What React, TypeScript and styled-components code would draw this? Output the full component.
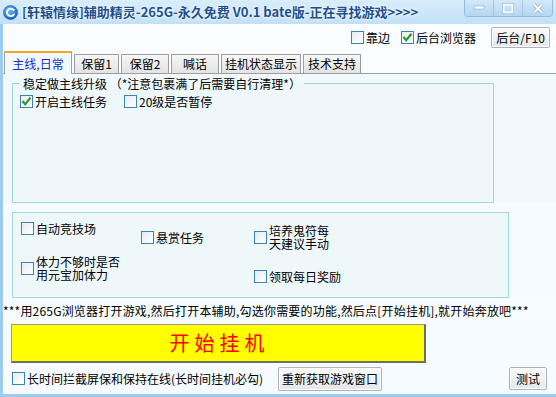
import React from "react";
import styled, { createGlobalStyle } from "styled-components";

const GlobalStyle = createGlobalStyle`
  html, body {
    margin: 0;
    padding: 0;
    background: #f5fbfe;
  }
  body {
    font-family: "Noto Sans CJK SC", "Liberation Sans", sans-serif;
    font-size: 12px;
    color: #000;
  }
`;

const Window = styled.div`
  width: 556px;
  height: 397px;
  display: flex;
  flex-direction: column;
  overflow: hidden;
  background: #f5fbfe;
`;

const TitleBar = styled.div`
  height: 24px;
  flex: none;
  display: flex;
  align-items: center;
  padding-left: 3px;
  background: linear-gradient(#d9edfb, #c2e0f6);
`;

const TitleText = styled.span`
  margin-left: 4px;
  font-size: 13px;
  font-weight: bold;
  line-height: 16px;
  color: #1d4f8e;
  text-shadow: 0 0 2px #fff, 0 0 4px #fff;
  white-space: nowrap;
`;

const WinButtons = styled.div`
  margin-left: auto;
  margin-right: 3px;
  align-self: flex-start;
  display: flex;
  height: 16px;
  border: 1px solid #8fbbe0;
  border-top: none;
  border-radius: 0 0 4px 4px;
  overflow: hidden;
`;

const WinButton = styled.div<{ $w: number }>`
  width: ${(p) => p.$w}px;
  display: flex;
  align-items: center;
  justify-content: center;
  background: linear-gradient(#d3e9f9, #b4d7f1);
  & + & {
    border-left: 1px solid #a3c9e8;
  }
`;

const Body = styled.div`
  flex: 1;
  display: flex;
  flex-direction: column;
  border-left: 3px solid #9ccbef;
  border-bottom: 3px solid #9ccbef;
  min-height: 0;
`;

const TopRow = styled.div`
  height: 27px;
  flex: none;
  display: flex;
  align-items: center;
  justify-content: flex-end;
  padding-right: 6px;
  background: #f9fdff;
`;

const Button = styled.div<{ $w: number; $h: number }>`
  width: ${(p) => p.$w}px;
  height: ${(p) => p.$h}px;
  box-sizing: border-box;
  display: flex;
  align-items: center;
  justify-content: center;
  border: 1px solid #a9b3bb;
  border-radius: 2px;
  background: linear-gradient(#fbfbfb, #e4e7ea);
  box-shadow: inset 0 0 0 1px #fff;
  font-size: 12px;
  line-height: 14px;
  white-space: nowrap;
`;

const CheckItem = styled.label<{ $lh?: number; $mt?: number; $mr?: number }>`
  display: flex;
  align-items: center;
  gap: 2px;
  margin-top: ${(p) => p.$mt ?? 0}px;
  margin-right: ${(p) => p.$mr ?? 0}px;
  line-height: ${(p) => p.$lh ?? 13}px;
  white-space: nowrap;
`;

const Box = styled.span`
  flex: none;
  width: 13px;
  height: 13px;
  box-sizing: border-box;
  border: 1px solid #3d82b5;
  background: linear-gradient(135deg, #e6edf2, #ffffff);
  display: flex;
  align-items: center;
  justify-content: center;
`;

const TabStrip = styled.div`
  height: 22px;
  flex: none;
  display: flex;
  align-items: flex-end;
  gap: 2px;
  padding-left: 1px;
  border-bottom: 1px solid #9e9e9e;
  background: #f9fdff;
`;

const Tab = styled.div<{ $w: number; $active?: boolean }>`
  width: ${(p) => p.$w}px;
  height: ${(p) => (p.$active ? 23 : 19)}px;
  box-sizing: border-box;
  display: flex;
  align-items: center;
  justify-content: center;
  border: 1px solid #9e9e9e;
  border-bottom: none;
  border-top: ${(p) => (p.$active ? "2px solid #f4a42a" : "1px solid #9e9e9e")};
  margin-bottom: ${(p) => (p.$active ? -1 : 0)}px;
  background: ${(p) =>
    p.$active ? "#f1f9fc" : "linear-gradient(#f7f7f7, #e3e3e3)"};
  color: ${(p) => (p.$active ? "#1030c8" : "#000")};
  font-size: 12px;
  line-height: 14px;
  white-space: nowrap;
`;

const Page = styled.div`
  display: flex;
  flex-direction: column;
  background: #f2f9fc;
`;

const GroupBox = styled.fieldset`
  margin: 3px 0 0 9px;
  padding: 0 7px;
  width: 482px;
  height: 126px;
  box-sizing: border-box;
  border: 1px solid #a3d4e7;
  background: #eef8fb;
  min-width: 0;
`;

const Legend = styled.legend`
  padding: 0 3px;
  line-height: 13px;
  white-space: nowrap;
`;

const MainRow = styled.div`
  display: grid;
  grid-template-columns: 104px auto;
  margin-top: 5px;
`;

const DailyBox = styled.div`
  margin: 9px 0 0 9px;
  width: 497px;
  height: 86px;
  box-sizing: border-box;
  border: 1px solid #a3d4e7;
  background: #eef8fb;
  padding: 7px 0 0 8px;
  display: grid;
  grid-template-columns: 120px 113px auto;
  grid-template-rows: 34px 34px;
  align-items: start;
`;

const Hint = styled.div`
  height: 24px;
  flex: none;
  display: flex;
  align-items: center;
  background: #f7fcfe;
  white-space: nowrap;
  font-size: 12px;
  letter-spacing: 0.2px;
`;

const StartButton = styled.div`
  margin: 2px 0 0 8px;
  width: 415px;
  height: 39px;
  flex: none;
  box-sizing: border-box;
  display: flex;
  align-items: center;
  justify-content: center;
  background: #ffff00;
  border: 1px solid #9a9a9a;
  border-right: 2px solid #6e6e6e;
  border-bottom: 2px solid #6e6e6e;
  color: #ff0000;
  font-size: 20px;
  letter-spacing: 5px;
  padding-left: 3px;
  line-height: 24px;
`;

const BottomRow = styled.div`
  flex: 1;
  display: flex;
  align-items: center;
  padding: 0 9px 0 9px;
`;

const Spacer = styled.div`
  flex: 1;
`;

const Check = () => (
  <svg width="11" height="11" viewBox="0 0 11 11">
    <polyline
      points="1.5,5 4.2,8.2 9.5,1.8"
      fill="none"
      stroke="#2f9a2f"
      strokeWidth="2.2"
    />
  </svg>
);

const CheckField = ({
  label,
  checked,
  lh,
  mt,
  mr,
}: {
  label: React.ReactNode;
  checked?: boolean;
  lh?: number;
  mt?: number;
  mr?: number;
}) => (
  <CheckItem $lh={lh} $mt={mt} $mr={mr}>
    <Box>{checked && <Check />}</Box>
    <span>{label}</span>
  </CheckItem>
);

const AppIcon = () => (
  <svg width="15" height="15" viewBox="0 0 16 16">
    <defs>
      <radialGradient id="ig" cx="0.4" cy="0.35" r="0.7">
        <stop offset="0" stopColor="#6fc0ff" />
        <stop offset="1" stopColor="#0d5fb8" />
      </radialGradient>
    </defs>
    <circle cx="8" cy="8" r="7.5" fill="url(#ig)" stroke="#0a4f9c" strokeWidth="0.6" />
    <path
      d="M11.2 5.2 A4 4 0 1 0 11.6 10"
      fill="none"
      stroke="#fff"
      strokeWidth="2"
      strokeLinecap="round"
    />
    <path d="M9.6 4.2 L12.4 4.4 L11.6 7 Z" fill="#fff" />
  </svg>
);

const tabs = [
  { label: "主线,日常", w: 68, active: true },
  { label: "保留1", w: 45 },
  { label: "保留2", w: 48 },
  { label: "喊话", w: 48 },
  { label: "挂机状态显示", w: 80 },
  { label: "技术支持", w: 58 },
];

export default function App() {
  return (
    <>
      <GlobalStyle />
      <Window>
        <TitleBar>
          <AppIcon />
          <TitleText>
            [轩辕情缘]辅助精灵-265G-永久免费 V0.1 bate版-正在寻找游戏&gt;&gt;&gt;&gt;
          </TitleText>
          <WinButtons>
            <WinButton $w={28}>
              <svg width="12" height="6" viewBox="0 0 12 6">
                <rect x="1" y="1" width="10" height="3" fill="#fff" stroke="#8aa9c4" strokeWidth="0.6" />
              </svg>
            </WinButton>
            <WinButton $w={28}>
              <svg width="12" height="11" viewBox="0 0 12 11">
                <rect x="1.5" y="1.5" width="9" height="8" fill="none" stroke="#fff" strokeWidth="2" />
                <rect x="0.5" y="0.5" width="11" height="10" fill="none" stroke="#8aa9c4" strokeWidth="0.5" />
              </svg>
            </WinButton>
            <WinButton $w={29}>
              <svg width="12" height="11" viewBox="0 0 12 11">
                <path d="M2 1.5 L10 9.5 M10 1.5 L2 9.5" stroke="#8aa9c4" strokeWidth="3.2" />
                <path d="M2 1.5 L10 9.5 M10 1.5 L2 9.5" stroke="#fff" strokeWidth="2" />
              </svg>
            </WinButton>
          </WinButtons>
        </TitleBar>
        <Body>
          <TopRow>
            <CheckField label="靠边" mr={11} />
            <CheckField label="后台浏览器" checked mr={15} />
            <Button $w={59} $h={21}>后台/F10</Button>
          </TopRow>
          <TabStrip>
            {tabs.map((t) => (
              <Tab key={t.label} $w={t.w} $active={t.active}>
                {t.label}
              </Tab>
            ))}
          </TabStrip>
          <Page>
            <GroupBox>
              <Legend>稳定做主线升级 （*注意包裹满了后需要自行清理*）</Legend>
              <MainRow>
                <CheckField label="开启主线任务" checked />
                <CheckField label="20级是否暂停" />
              </MainRow>
            </GroupBox>
          </Page>
          <DailyBox>
            <CheckField label="自动竞技场" mt={2} />
            <CheckField label="悬赏任务" mt={11} />
            <CheckField
              label={
                <>
                  培养鬼符每
                  <br />
                  天建议手动
                </>
              }
              lh={13}
              mt={4}
            />
            <CheckField
              label={
                <>
                  体力不够时是否
                  <br />
                  用元宝加体力
                </>
              }
              lh={13}
              mt={1}
            />
            <span />
            <CheckField label="领取每日奖励" mt={16} />
          </DailyBox>
          <Hint>
            ***用265G浏览器打开游戏,然后打开本辅助,勾选你需要的功能,然后点[开始挂机],就开始奔放吧***
          </Hint>
          <StartButton>开始挂机</StartButton>
          <BottomRow>
            <CheckField label="长时间拦截屏保和保持在线(长时间挂机必勾)" mr={15} />
            <Button $w={104} $h={24}>重新获取游戏窗口</Button>
            <Spacer />
            <Button $w={38} $h={23}>测试</Button>
          </BottomRow>
        </Body>
      </Window>
    </>
  );
}
